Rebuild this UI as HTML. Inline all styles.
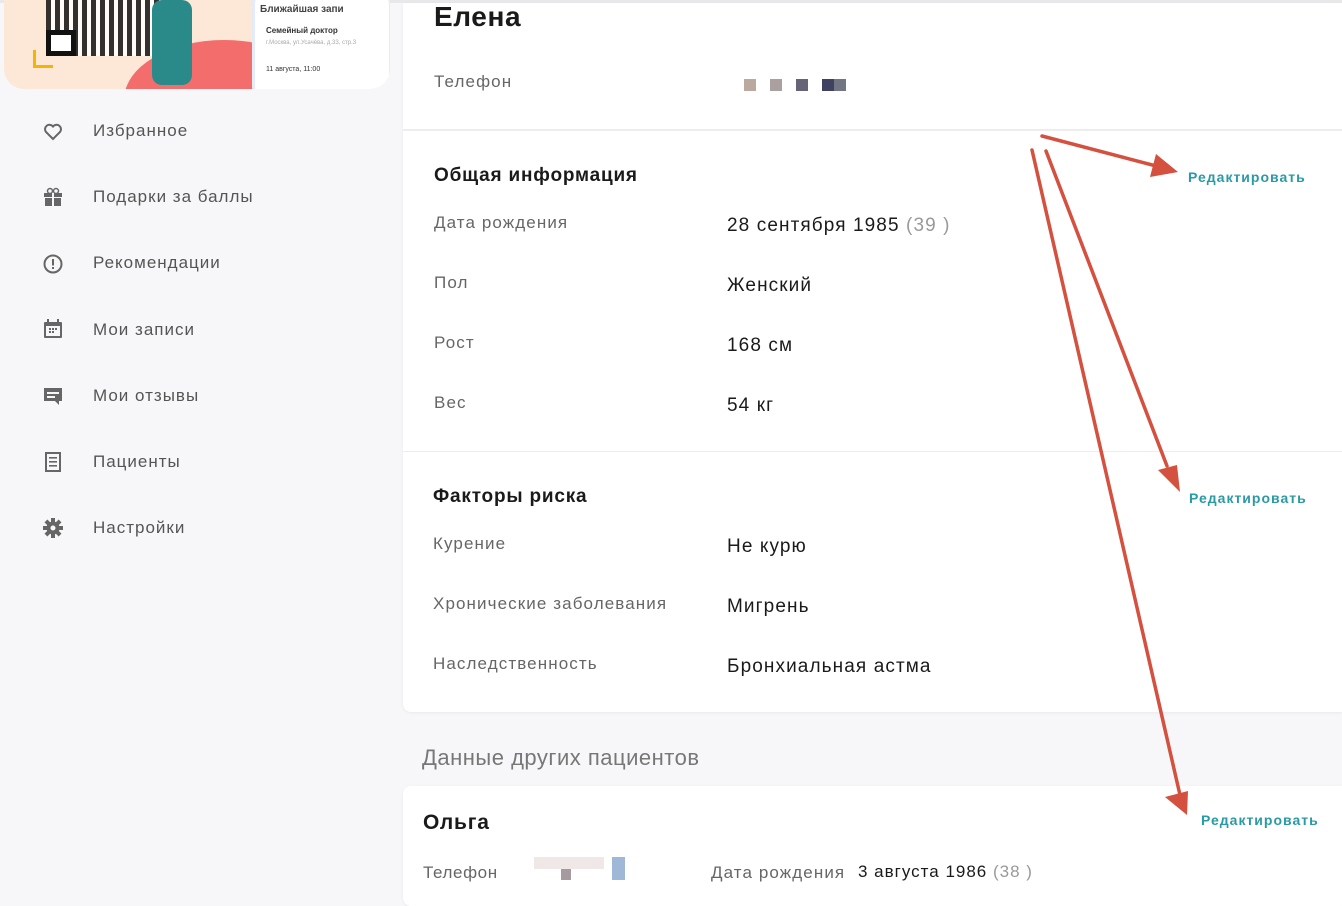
<!DOCTYPE html>
<html><head><meta charset="utf-8"><style>
*{margin:0;padding:0;box-sizing:border-box}
body{width:1342px;height:896px;overflow:hidden;background:#f7f7f9;font-family:"Liberation Sans","Noto Sans CJK SC",sans-serif;position:relative;color:#1a1a1a}
.a{position:absolute;white-space:nowrap}
.nav{font-size:17px;color:#555;letter-spacing:1px}
.lbl{font-size:17px;color:#666;letter-spacing:1.1px}
.val{font-size:19px;color:#1a1a1a;letter-spacing:1.1px}
.h{font-size:19px;font-weight:bold;color:#1a1a1a;letter-spacing:.8px}
.ed{font-size:14px;font-weight:bold;color:#2a9aa4;letter-spacing:1px}
.card{position:absolute;background:#fff;border-radius:8px}
.px{position:absolute;width:12px;height:12px}
</style></head><body>
<div class="a" style="left:0;top:0;width:1342px;height:3px;background:#e8e8ea"></div>
<!-- banner -->
<div class="card" style="left:4px;top:0;width:386px;height:89px;background:#fde8d8;border-radius:0 0 20px 20px;overflow:hidden">
 <div style="position:absolute;left:120px;top:40px;width:200px;height:120px;background:#f36d6d;border-radius:50%"></div>
 <div style="position:absolute;left:42px;top:0;width:115px;height:56px;background:repeating-linear-gradient(90deg,#111 0 5px,#fff 5px 9px),#fff;opacity:.85"></div>
 <div style="position:absolute;left:42px;top:30px;width:30px;height:26px;border:5px solid #111;background:#fff"></div>
 <div style="position:absolute;left:29px;top:50px;width:20px;height:18px;border-left:3px solid #f5b400;border-bottom:3px solid #f5b400"></div>
 <div style="position:absolute;left:150px;top:50px;width:20px;height:18px;border-right:3px solid #f5b400;border-bottom:3px solid #f5b400"></div>
 <div style="position:absolute;left:148px;top:0;width:40px;height:85px;background:#2a8a8a;border-radius:10px"></div>
 <div style="position:absolute;left:248px;top:-10px;width:140px;height:110px;background:#fff;border-radius:14px;border:3px solid #e4ecf8"></div>
 <div class="a" style="left:256px;top:4px;font-size:10px;font-weight:bold;color:#444">Ближайшая запи</div>
 <div class="a" style="left:262px;top:26px;font-size:8px;font-weight:bold;color:#333">Семейный доктор</div>
 <div class="a" style="left:262px;top:40px;font-size:6px;color:#aaa">г.Москва, ул.Усачёва, д.33, стр.3</div>
 <div class="a" style="left:262px;top:66px;font-size:7px;color:#333">11 августа, 11:00</div>
</div>
<!-- nav -->
<svg class="a" style="left:43px;top:122px" width="20" height="20" viewBox="0 0 20 20"><path d="M10 17L3 10A4 4 0 0 1 10 4.5A4 4 0 0 1 17 10Z" fill="none" stroke="#666" stroke-width="2"/></svg>
<div class="a nav" style="left:93px;top:121px">Избранное</div>
<svg class="a" style="left:43px;top:187px" width="20" height="20" viewBox="0 0 20 20"><rect x="1" y="6" width="18" height="4" fill="#666"/><rect x="2" y="11" width="16" height="8" fill="#666"/><circle cx="7" cy="4" r="2.5" fill="none" stroke="#666" stroke-width="1.5"/><circle cx="13" cy="4" r="2.5" fill="none" stroke="#666" stroke-width="1.5"/><rect x="9" y="6" width="2" height="13" fill="#f7f7f9"/></svg>
<div class="a nav" style="left:93px;top:187px">Подарки за баллы</div>
<svg class="a" style="left:43px;top:254px" width="20" height="20" viewBox="0 0 20 20"><circle cx="10" cy="10" r="8.5" fill="none" stroke="#666" stroke-width="2"/><rect x="9" y="5" width="2" height="6.5" fill="#666"/><rect x="9" y="13" width="2" height="2" fill="#666"/></svg>
<div class="a nav" style="left:93px;top:253px">Рекомендации</div>
<svg class="a" style="left:43px;top:319px" width="20" height="20" viewBox="0 0 20 20"><rect x="1" y="3" width="18" height="16" rx="1" fill="#666"/><rect x="3" y="7" width="14" height="10" fill="#f7f7f9"/><rect x="4" y="0" width="2" height="4" fill="#666"/><rect x="14" y="0" width="2" height="4" fill="#666"/><g fill="#666"><rect x="6" y="9" width="2" height="2"/><rect x="9" y="9" width="2" height="2"/><rect x="12" y="9" width="2" height="2"/><rect x="6" y="12" width="2" height="2"/><rect x="9" y="12" width="2" height="2"/></g></svg>
<div class="a nav" style="left:93px;top:320px">Мои записи</div>
<svg class="a" style="left:43px;top:386px" width="20" height="20" viewBox="0 0 20 20"><path d="M1 2H19V15H16V19L12 15H1Z" fill="#666"/><rect x="4" y="6" width="12" height="2" fill="#f7f7f9"/><rect x="4" y="10" width="8" height="2" fill="#f7f7f9"/></svg>
<div class="a nav" style="left:93px;top:386px">Мои отзывы</div>
<svg class="a" style="left:43px;top:452px" width="20" height="20" viewBox="0 0 20 20"><path d="M3 1H17V19H3Z" fill="none" stroke="#666" stroke-width="2"/><rect x="6" y="5" width="8" height="1.6" fill="#666"/><rect x="6" y="9" width="8" height="1.6" fill="#666"/><rect x="6" y="13" width="8" height="1.6" fill="#666"/></svg>
<div class="a nav" style="left:93px;top:452px">Пациенты</div>
<svg class="a" style="left:43px;top:518px" width="20" height="20" viewBox="0 0 20 20"><g fill="#666"><circle cx="10" cy="10" r="6.5"/><g transform="translate(10 10)"><rect x="-2" y="-10" width="4" height="20"/><rect x="-2" y="-10" width="4" height="20" transform="rotate(45)"/><rect x="-2" y="-10" width="4" height="20" transform="rotate(90)"/><rect x="-2" y="-10" width="4" height="20" transform="rotate(135)"/></g></g><circle cx="10" cy="10" r="2.5" fill="#f7f7f9"/></svg>
<div class="a nav" style="left:93px;top:518px">Настройки</div>
<!-- main card -->
<div class="card" style="left:403px;top:3px;width:945px;height:709px;border-radius:0 0 8px 8px;box-shadow:0 1px 3px rgba(0,0,0,.06)"></div>
<div class="a" style="left:403px;top:129px;width:939px;height:2px;background:#ededed"></div>
<div class="a" style="left:403px;top:451px;width:939px;height:1px;background:#ededed"></div>
<div class="a" style="left:434px;top:1px;font-size:28px;font-weight:bold;color:#1a1a1a;letter-spacing:.6px">Елена</div>
<div class="a lbl" style="left:434px;top:72px">Телефон</div>
<div class="px" style="left:744px;top:79px;background:#bba9a0"></div>
<div class="px" style="left:770px;top:79px;background:#aaa0a0"></div>
<div class="px" style="left:796px;top:79px;background:#676478"></div>
<div class="px" style="left:822px;top:79px;background:#3e4260"></div>
<div class="px" style="left:834px;top:79px;background:#727682"></div>
<div class="a h" style="left:434px;top:165px">Общая информация</div>
<div class="a ed" style="left:1188px;top:169px">Редактировать</div>
<div class="a lbl" style="left:434px;top:213px">Дата рождения</div>
<div class="a val" style="left:727px;top:215px">28 сентября 1985 <span style="color:#999">(39 )</span></div>
<div class="a lbl" style="left:434px;top:273px">Пол</div>
<div class="a val" style="left:727px;top:275px">Женский</div>
<div class="a lbl" style="left:434px;top:333px">Рост</div>
<div class="a val" style="left:727px;top:335px">168 см</div>
<div class="a lbl" style="left:434px;top:393px">Вес</div>
<div class="a val" style="left:727px;top:395px">54 кг</div>
<div class="a h" style="left:433px;top:486px">Факторы риска</div>
<div class="a ed" style="left:1189px;top:490px">Редактировать</div>
<div class="a lbl" style="left:433px;top:534px">Курение</div>
<div class="a val" style="left:727px;top:536px">Не курю</div>
<div class="a lbl" style="left:433px;top:594px">Хронические заболевания</div>
<div class="a val" style="left:727px;top:596px">Мигрень</div>
<div class="a lbl" style="left:433px;top:654px">Наследственность</div>
<div class="a val" style="left:727px;top:656px">Бронхиальная астма</div>
<div class="a" style="left:422px;top:745px;font-size:22px;color:#777;letter-spacing:.5px">Данные других пациентов</div>
<div class="card" style="left:403px;top:786px;width:945px;height:120px;box-shadow:0 1px 3px rgba(0,0,0,.06)"></div>
<div class="a h" style="left:423px;top:811px;font-size:21px">Ольга</div>
<div class="a ed" style="left:1201px;top:812px">Редактировать</div>
<div class="a lbl" style="left:423px;top:863px;letter-spacing:.6px">Телефон</div>
<div class="px" style="left:534px;top:857px;width:70px;height:12px;background:#efe8e6"></div>
<div class="px" style="left:561px;top:869px;width:10px;height:11px;background:#a49aa0"></div>
<div class="px" style="left:612px;top:857px;width:13px;height:23px;background:#a0b8d8"></div>
<div class="a lbl" style="left:711px;top:863px">Дата рождения</div>
<div class="a val" style="left:858px;top:862px;font-size:17px;letter-spacing:1px">3 августа 1986 <span style="color:#999">(38 )</span></div>
<!-- arrows -->
<svg class="a" style="left:0;top:0" width="1342" height="896">
<g stroke="#d4503f" stroke-width="3.5" fill="none" stroke-linecap="round">
<line x1="1042" y1="136" x2="1160" y2="167"/>
<line x1="1046" y1="151" x2="1167" y2="466"/>
<line x1="1032" y1="150" x2="1180" y2="795"/>
</g>
<g fill="#d4503f">
<polygon points="1178,172 1150,177 1156,154"/>
<polygon points="1180,492 1158,470 1177,465"/>
<polygon points="1187,815 1165,797 1188,791"/>
</g>
</svg>
</body></html>
